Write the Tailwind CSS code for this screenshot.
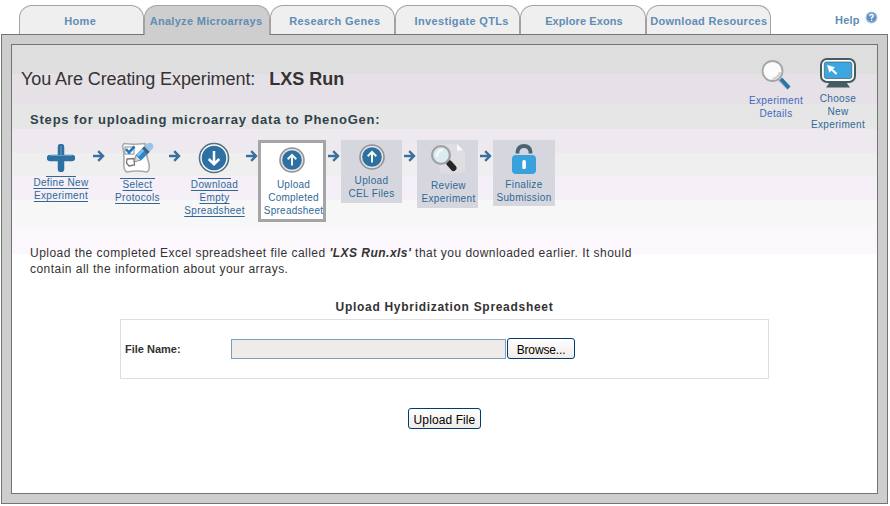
<!DOCTYPE html>
<html lang="en">
<head>
<meta charset="utf-8">
<title>PhenoGen - Upload Spreadsheet</title>
<script src="https://cdn.jsdelivr.net/npm/@tailwindcss/browser@4"></script>
</head>
<body class="bg-white w-[890px] h-[506px] overflow-hidden font-['Liberation_Sans',Arial,sans-serif] text-[#333]">
<svg class="hidden">
  <symbol id="arrow" viewBox="0 0 12 12"><path d="M0 6H9.5M5.2 1.2L10 6L5.2 10.8" fill="none" stroke="#3a6f9f" stroke-width="2.4"/></symbol>
  <symbol id="up" viewBox="0 0 26 26"><circle cx="13" cy="13" r="12" fill="#e4e4e6" stroke="#929295" stroke-width="1.6"/><circle cx="13" cy="13" r="9.8" fill="#2d70a3"/><path d="M13 18.5V8.5M8.7 12.3L13 8L17.3 12.3" fill="none" stroke="#f4f7e8" stroke-width="2"/></symbol>
</svg>
<div class="flex h-[34px] pl-[19px] pt-[5px] text-[11px] font-bold text-[#5f8db5]">
  <nav class="grid grid-cols-6 w-[752px] h-[29px]">
    <a class="min-w-0 rounded-t-[13px] border border-b-0 border-[#a5a2a5] bg-[#efefef] flex justify-center pt-[8px] pr-[3px] leading-[14px] whitespace-nowrap tracking-[0.35px]">Home</a>
    <a class="min-w-0 rounded-t-[13px] border border-b-0 border-[#a5a2a5] bg-[#cecece] flex justify-center pt-[8px] pr-[2px] leading-[14px] whitespace-nowrap tracking-[0.3px] -mb-px relative z-10">Analyze Microarrays</a>
    <a class="min-w-0 rounded-t-[13px] border border-b-0 border-[#a5a2a5] bg-[#efefef] flex justify-center pt-[8px] pl-[5px] leading-[14px] whitespace-nowrap tracking-[0.35px]">Research Genes</a>
    <a class="min-w-0 rounded-t-[13px] border border-b-0 border-[#a5a2a5] bg-[#efefef] flex justify-center pt-[8px] pl-[8px] leading-[14px] whitespace-nowrap tracking-[0.35px]">Investigate QTLs</a>
    <a class="min-w-0 rounded-t-[13px] border border-b-0 border-[#a5a2a5] bg-[#efefef] flex justify-center pt-[8px] pl-[2px] leading-[14px] whitespace-nowrap tracking-[0.1px]">Explore Exons</a>
    <a class="min-w-0 rounded-t-[13px] border border-b-0 border-[#a5a2a5] bg-[#efefef] flex justify-center pt-[8px] pl-px leading-[14px] whitespace-nowrap tracking-[0.3px]">Download Resources</a>
  </nav>
  <div class="ml-[64px] flex pt-[5px] gap-[5px]">
    <span class="pt-[3px] leading-[14px] tracking-[0.2px]">Help</span>
    <svg class="w-[13px] h-[13px] mt-px" viewBox="0 0 13 13"><circle cx="6.5" cy="6.5" r="6" fill="#a9c4e0"/><circle cx="6.5" cy="6.5" r="4.7" fill="#5f8fc4"/><path d="M4.7 5.2Q4.8 3.4 6.6 3.4Q8.5 3.5 8.3 5.1Q8.1 6.1 6.6 6.6V7.8M6.6 8.8V10" fill="none" stroke="#fff" stroke-width="1.4"/></svg>
  </div>
</div>
<div class="ml-px w-[887px] h-[470px] border border-[#737573] bg-[#cecece] p-[9px]">
  <main class="h-[450px] w-[867px] border border-[#737573] pl-[9px] bg-[linear-gradient(to_bottom,#dedede_29px,#e6e1e6_29px,#e6e1e6_59px,#e6e6e6_59px,#e6e6e6_84px,#eee9ef_84px,#eee9ef_108px,#efefef_108px,#efefef_131px,#f5f0f7_131px,#f5f0f7_155px,#f7f7f7_155px,#f7f7f7_181px,#fcf7fd_181px,#fcf7fd_209px,#fff_209px)]">
    <div class="flex h-[95px]">
      <div class="w-[728px] pt-[22px]">
        <h1 class="text-[18px] leading-[24px] whitespace-nowrap"><span class="tracking-[-0.08px]">You Are Creating Experiment:</span><b class="ml-[14px]">LXS Run</b></h1>
        <h2 class="ml-[9px] mt-[20px] text-[13px] leading-[18px] font-bold text-[#30424a] tracking-[0.8px] whitespace-nowrap">Steps for uploading microarray data to PhenoGen:</h2>
      </div>
      <a class="w-[54px] pt-[14px] text-center text-[10px] leading-[13px] tracking-[0.35px] text-[#4169bd] whitespace-nowrap">
        <svg class="mx-auto w-[32px] h-[32px]" viewBox="0 0 32 32"><path d="M20 20L29 29" stroke="#a4adb3" stroke-width="5"/><path d="M21 20L29 29" stroke="#2475a9" stroke-width="3.5"/><circle cx="12.5" cy="12" r="10" fill="#fbfbfb" stroke="#a5a5a5" stroke-width="1.8"/><path d="M20 13Q19 18.5 12.5 20" fill="none" stroke="#d3d3d3" stroke-width="2.5"/></svg>
        <div class="mt-[3px]">Experiment<br>Details</div>
      </a>
      <a class="ml-[8px] w-[54px] pt-[13px] text-center text-[10px] leading-[13px] tracking-[0.35px] text-[#2f6898] whitespace-nowrap">
        <svg class="mx-auto w-[36px] h-[30px]" viewBox="0 0 36 30"><path d="M10 23H26L27.5 26L30 29.5H6L8.5 26Z" fill="#455c64"/><rect x="1" y="1" width="34" height="23" rx="6" fill="#fff" stroke="#455c64" stroke-width="2"/><rect x="4.3" y="4" width="27.5" height="16.5" rx="2" fill="#3da5df" stroke="#455c64" stroke-width=".7"/><path d="M7 7L15 9.3L12.9 10.9L17.3 15.3L15.8 16.8L11.4 12.4L9.5 14.8Z" fill="#fff"/></svg>
        <div class="mt-[4px]">Choose<br>New<br>Experiment</div>
      </a>
    </div>
    <div class="flex h-[104px] items-start text-[10px] leading-[13px] tracking-[0.35px] text-[#2f6898] text-center whitespace-nowrap">
      <a class="ml-[6px] w-[68px] pt-[4px] underline underline-offset-2">
        <svg class="mx-auto w-[28px] h-[28px]" viewBox="0 0 28 28"><path d="M14 3V25M3 14H25" stroke="#2d70a3" stroke-width="6.5" stroke-linecap="round"/><path d="M14 2V11M3 11.5H25" stroke="#6b9abd" stroke-width="1"/></svg>
        <div class="mx-auto mt-[4px] w-[30px] border-t border-[#2f6898]"></div>
        <div class="-mt-px">Define New<br>Experiment</div>
      </a>
      <svg class="ml-[-2px] mt-[10px] w-[12px] h-[12px]"><use href="#arrow"/></svg>
      <a class="ml-[-1px] w-[66px] pt-[2px] underline underline-offset-2">
        <svg class="mx-auto w-[34px] h-[32px]" viewBox="0 0 34 32"><path d="M4 1.5Q14 3 25 1.5Q25 9 28 18Q31 28 27 30Q17 28 7 30Q3 29 4 18Q4 9 2.5 4Z" fill="#fff" stroke="#aaa" stroke-width="1.6"/><rect x="5" y="5" width="9" height="7" fill="#fff" stroke="#8a8a8a"/><path d="M7 17L14 16.5L14.5 23L9 24L6.5 21Z" fill="#fff" stroke="#777" stroke-width="1.3"/><path d="M6 7L9 10.5L14.5 4.5" fill="none" stroke="#1e78c3" stroke-width="2.6"/><path d="M14 20L16 13L21 18Z" fill="#d8d8d8" stroke="#777" stroke-width=".8"/><path d="M15.8 13L23 5.5L28.5 11L21 18.5Z" fill="#2e86ca"/><path d="M16.5 12.5L23.2 5.5L25.3 7.6L18.5 14.7Z" fill="#7dc0ef"/><path d="M22 6.5L24.2 4.3L29.8 9.8L27.5 12Z" fill="#46637a"/><path d="M24.5 4L27.5 1.2Q30.5 -.2 32.5 2Q34.2 4.2 32.7 6.6L29.8 9.5Z" fill="#92c4ec"/></svg>
        <div class="mx-auto mt-[4px] w-[35px] border-t border-[#2f6898]"></div>
        <div class="-mt-px pl-px">Select<br>Protocols</div>
      </a>
      <svg class="ml-[-1px] mt-[10px] w-[12px] h-[12px]"><use href="#arrow"/></svg>
      <a class="ml-[-1px] w-[68px] pt-[2px] underline underline-offset-2">
        <svg class="mx-auto w-[32px] h-[32px]" viewBox="0 0 32 32"><circle cx="16" cy="16" r="14.5" fill="#fff" stroke="#536f7d" stroke-width="1.6"/><circle cx="16" cy="16" r="12.3" fill="#2d70a3"/><path d="M16 9V22M10.7 17L16 22.2L21.3 17" fill="none" stroke="#fff" stroke-width="2.5"/></svg>
        <div class="mx-auto mt-[4px] w-[33px] border-t border-[#2f6898]"></div>
        <div class="-mt-px pl-px">Download<br>Empty<br>Spreadsheet</div>
      </a>
      <svg class="ml-[-2px] mt-[10px] w-[12px] h-[12px]"><use href="#arrow"/></svg>
      <a class="w-[68px] h-[82px] border-[3px] border-[#a5a5a5] bg-white pt-[4px] flex flex-col items-center">
        <svg class="w-[26px] h-[26px]"><use href="#up"/></svg>
        <div class="mt-[5px] pl-[3px] tracking-[0.25px]">Upload<br>Completed<br>Spreadsheet</div>
      </a>
      <svg class="ml-[2px] mt-[10px] w-[12px] h-[12px]"><use href="#arrow"/></svg>
      <a class="ml-px w-[61px] h-[63px] bg-[#d6d7de] pt-[4px]">
        <svg class="mx-auto w-[26px] h-[26px]"><use href="#up"/></svg>
        <div class="mt-[4px]">Upload<br>CEL Files</div>
      </a>
      <svg class="ml-[2px] mt-[10px] w-[12px] h-[12px]"><use href="#arrow"/></svg>
      <a class="ml-px w-[61px] h-[68px] bg-[#d6d7de] pt-[3px]">
        <svg class="mx-auto w-[36px] h-[32px]" viewBox="0 0 36 32"><path d="M9 1H27L35 9V29Q22 32 10 30Z" fill="#dddde2"/><path d="M27 1L27 8L33 7Z" fill="#fafafa"/><path d="M17 18L22 23" stroke="#777" stroke-width="3"/><path d="M19.5 20.5L23.5 25" stroke="#262626" stroke-width="6" stroke-linecap="round"/><circle cx="11" cy="12" r="8.9" fill="#dcebf2" stroke="#a2a2a5" stroke-width="2.3"/><path d="M7 14Q7 7 13 7" fill="none" stroke="#f7fbfd" stroke-width="2"/></svg>
        <div class="mt-[4px] pl-[2px]">Review<br>Experiment</div>
      </a>
      <svg class="ml-[2px] mt-[10px] w-[12px] h-[12px]"><use href="#arrow"/></svg>
      <a class="ml-px w-[62px] h-[66px] bg-[#d6d7de] pt-[4px]">
        <svg class="mx-auto w-[26px] h-[31px]" viewBox="0 0 26 31"><path d="M6.5 9.5V7.5Q7.5 2 13 2Q18.5 2 19.5 7.5V9.5" fill="none" stroke="#4a6470" stroke-width="3.8"/><rect x="1" y="11" width="24" height="19" rx="4" fill="#39a1db"/><rect x="11.3" y="16" width="3.6" height="9" rx="1.5" fill="#fff"/></svg>
        <div class="mt-[3px]">Finalize<br>Submission</div>
      </a>
    </div>
    <p class="ml-[9px] pt-px text-[12px] leading-[16px] tracking-[0.47px] whitespace-nowrap">Upload the completed Excel spreadsheet file called <b class="italic">'LXS Run.xls'</b> that you downloaded earlier. It should<br>contain all the information about your arrays.</p>
    <form class="ml-[99px] mt-[23px] w-[649px]">
      <h3 class="text-center text-[12px] leading-[14px] font-bold tracking-[0.7px]">Upload Hybridization Spreadsheet</h3>
      <div class="mt-[5px] h-[60px] border border-[#dedede] flex items-center pl-[4px]">
        <label class="w-[106px] text-[11px] font-bold">File Name:</label>
        <div class="w-[275px] h-[20px] border border-[#7b9ebd] bg-[#efebe9]"></div>
        <button type="button" class="ml-px mb-px w-[68px] h-[21px] border border-[#003c74] rounded-[3px] bg-linear-to-b from-white to-[#efebe7] text-[12px] leading-[20px] text-black pt-px tracking-[-0.15px]">Browse...</button>
      </div>
      <button type="button" class="block mx-auto mt-[29px] w-[73px] h-[21px] border border-[#003c74] rounded-[3px] bg-linear-to-b from-white to-[#efebe7] text-[12px] leading-[20px] text-black pt-px whitespace-nowrap tracking-[0.1px]">Upload File</button>
    </form>
  </main>
</div>
</body>
</html>
